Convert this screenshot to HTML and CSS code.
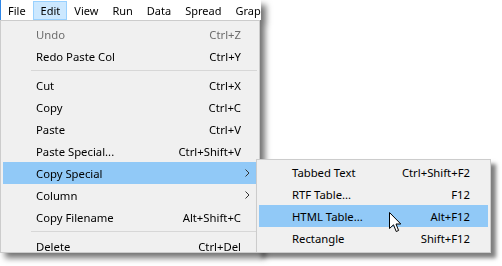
FILE: index.html
```html
<!DOCTYPE html>
<html>
<head>
<meta charset="utf-8">
<link rel="stylesheet" href="styles.css">
</head>
<body>
<div class="app">
  <div class="shot">
    <div class="menubar">
      <span class="mb-item">File</span>
      <span class="mb-item active">Edit</span>
      <span class="mb-item">View</span>
      <span class="mb-item">Run</span>
      <span class="mb-item">Data</span>
      <span class="mb-item">Spread</span>
      <span class="mb-item last">Grap</span>
    </div>
    <div class="dropdown">
      <div class="item disabled"><span class="label">Undo</span><span class="key">Ctrl+Z</span><span class="sub"></span></div>
      <div class="item"><span class="label">Redo Paste Col</span><span class="key">Ctrl+Y</span><span class="sub"></span></div>
      <div class="sep"></div>
      <div class="item"><span class="label">Cut</span><span class="key">Ctrl+X</span><span class="sub"></span></div>
      <div class="item"><span class="label">Copy</span><span class="key">Ctrl+C</span><span class="sub"></span></div>
      <div class="item"><span class="label">Paste</span><span class="key">Ctrl+V</span><span class="sub"></span></div>
      <div class="item"><span class="label">Paste Special...</span><span class="key">Ctrl+Shift+V</span><span class="sub"></span></div>
      <div class="item hot"><span class="label">Copy Special</span><span class="key"></span><span class="sub"><svg class="chev" viewBox="0 0 5 8" width="5" height="8"><path d="M0.5 0.5 L4 4 L0.5 7.5" fill="none" stroke="#333" stroke-width="1"/></svg></span></div>
      <div class="item"><span class="label">Column</span><span class="key"></span><span class="sub"><svg class="chev" viewBox="0 0 5 8" width="5" height="8"><path d="M0.5 0.5 L4 4 L0.5 7.5" fill="none" stroke="#333" stroke-width="1"/></svg></span></div>
      <div class="item"><span class="label">Copy Filename</span><span class="key">Alt+Shift+C</span><span class="sub"></span></div>
      <div class="sep"></div>
      <div class="item"><span class="label">Delete</span><span class="key">Ctrl+Del</span><span class="sub"></span></div>
    </div>
  </div>
  <div class="submenu">
    <div class="item"><span class="label">Tabbed Text</span><span class="key">Ctrl+Shift+F2</span><span class="sub wide"></span></div>
    <div class="item"><span class="label">RTF Table...</span><span class="key">F12</span><span class="sub wide"></span></div>
    <div class="item hot"><span class="label">HTML Table...</span><span class="key">Alt+F12</span><span class="sub wide"></span></div>
    <div class="item"><span class="label">Rectangle</span><span class="key">Shift+F12</span><span class="sub wide"></span></div>
  </div>
  <svg class="cursor" width="13" height="21" viewBox="0 0 13 21">
    <path d="M0.5 0.5 L0.5 16.5 L4.5 12.8 L7.2 19.5 L9.6 18.5 L7 12 L11.8 12 Z" fill="#fff" stroke="#000" stroke-width="1" stroke-linejoin="miter"/>
  </svg>
</div>
</body>
</html>
```

FILE: styles.css
```css
* { box-sizing: border-box; }
html, body {
  margin: 0;
  padding: 0;
  background: #fff;
}
body {
  font-family: "Noto Sans", "Segoe UI", sans-serif;
  font-size: 11.3px;
  color: #000;
  width: 502px;
  height: 266px;
  overflow: hidden;
}
.app {
  position: relative;
  width: 502px;
  height: 266px;
}
.shot {
  width: 261px;
  filter: drop-shadow(5px 5px 3px rgba(0, 0, 0, 0.55));
}
.menubar {
  display: flex;
  height: 20px;
  padding-top: 1px;
  background: #fff;
  border-left: 1px solid #2f86e6;
  overflow: hidden;
  white-space: nowrap;
  font-size: 11px;
}
.mb-item {
  height: 19px;
  line-height: 18px;
  padding: 0 6px;
  border: 1px solid transparent;
  flex: none;
}
.mb-item.last { padding-right: 0; }
.mb-item.active {
  background: #cce8ff;
  border-color: #99d1ff;
  padding: 0 6px 0 7px;
}
.dropdown {
  height: 233px;
  width: 260px;
  background: #f0f0f0;
  border: 1px solid #cccccc;
  padding: 2px 2px 0 2px;
  overflow: hidden;
}
.item {
  display: flex;
  align-items: center;
  height: 22px;
  padding-left: 33px;
  white-space: nowrap;
}
.item.hot { background: #91c9f7; }
.item.disabled { color: #6d6d6d; }
.label { flex: 1; }
.key { flex: none; }
.sub {
  flex: none;
  width: 16px;
  display: flex;
  align-items: center;
  padding-left: 4px;
}
.sub.wide { width: 18px; }
.chev { display: block; }
.sep {
  height: 7px;
  display: flex;
  align-items: center;
  padding-left: 28px;
}
.sep::before {
  content: "";
  display: block;
  flex: 1;
  height: 1px;
  background: #d7d7d7;
}
.submenu {
  position: absolute;
  left: 256px;
  top: 159px;
  width: 235px;
  height: 94px;
  background: #f0f0f0;
  border: 1px solid #cccccc;
  padding: 1px 2px 2px 2px;
  box-shadow: 5px 5px 4px rgba(0, 0, 0, 0.5);
}
.cursor {
  position: absolute;
  left: 389px;
  top: 212px;
}
```
